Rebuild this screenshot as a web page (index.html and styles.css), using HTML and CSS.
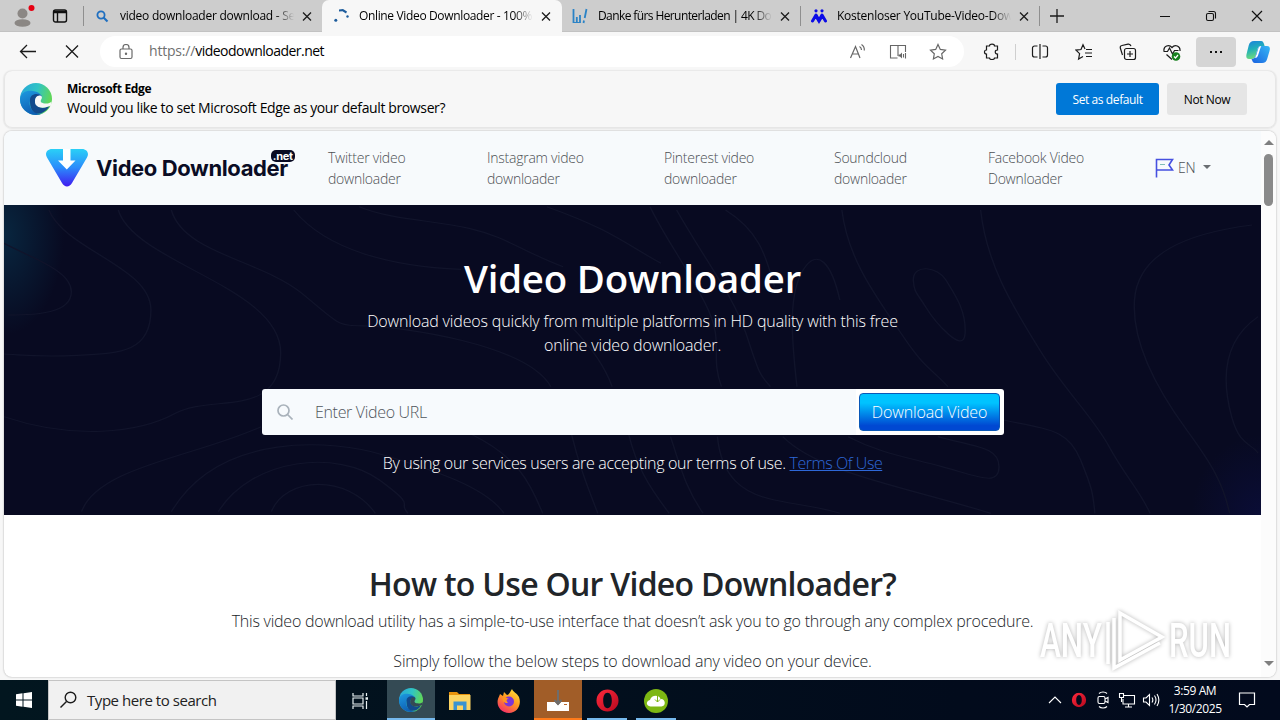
FILE: index.html
```html
<!DOCTYPE html>
<html lang="en">
<head>
  <meta charset="UTF-8">
  <meta name="viewport" content="width=device-width, initial-scale=1.0">
  <title>Online Video Downloader</title>
  <link rel="stylesheet" href="styles.css">
</head>
<body>
  <!-- shared icons -->
  <svg class="defs" width="0" height="0">
    <defs>
      <linearGradient id="edgeTop" x1="0" y1="0" x2="1" y2="0.3">
        <stop offset="0" stop-color="#27a4dc"/><stop offset="0.55" stop-color="#30c4c4"/><stop offset="1" stop-color="#5fd65a"/>
      </linearGradient>
      <linearGradient id="edgeLeft" x1="0" y1="0" x2="0.4" y2="1">
        <stop offset="0" stop-color="#1d9ae0"/><stop offset="1" stop-color="#0f5fb4"/>
      </linearGradient>
      <linearGradient id="logoFill" x1="0" y1="0" x2="0" y2="1">
        <stop offset="0" stop-color="#2ad0f7"/><stop offset="0.5" stop-color="#2b8bfb"/><stop offset="1" stop-color="#3f1cf0"/>
      </linearGradient>
      <linearGradient id="operaFill" x1="0" y1="0" x2="1" y2="1">
        <stop offset="0" stop-color="#ff2a3c"/><stop offset="1" stop-color="#b5081e"/>
      </linearGradient>
      <linearGradient id="foxFill" x1="0.8" y1="0" x2="0.2" y2="1">
        <stop offset="0" stop-color="#ffe23c"/><stop offset="0.45" stop-color="#ff9a1f"/><stop offset="1" stop-color="#f5266e"/>
      </linearGradient>
      <linearGradient id="copA" x1="0" y1="0" x2="0.3" y2="1">
        <stop offset="0" stop-color="#1c7fe0"/><stop offset="0.5" stop-color="#21b0b8"/><stop offset="1" stop-color="#6fdc7c"/>
      </linearGradient>
      <linearGradient id="copB" x1="0" y1="1" x2="1" y2="0">
        <stop offset="0" stop-color="#1a62e0"/><stop offset="1" stop-color="#35b7f5"/>
      </linearGradient>
      <symbol id="edge" viewBox="0 0 32 32">
        <circle cx="16" cy="16" r="16" fill="url(#edgeTop)"/>
        <path d="M0 16C1 9 7 7 13 8c6 1 9 4 9 7-6-5-14 0-12 8 2 6 8 9 13 7-8 5-23 0-23-14z" fill="url(#edgeLeft)"/>
        <path d="M10 17c0-6 7-8 12-4-6-1-8 4-6 8 3 5 9 4 13.500 2C25 31 16 33 12 27c-2-3-2-6-2-10z" fill="#124a8c"/>
      </symbol>
      <symbol id="close" viewBox="0 0 16 16"><path d="M4 4.500l8 8M12 4.500l-8 8" fill="none" stroke="#1b1b1b" stroke-width="1.300"/></symbol>
      <symbol id="opera" viewBox="0 0 24 24">
        <path fill-rule="evenodd" fill="url(#operaFill)" stroke="none" d="M12 0.500a11.500 11.500 0 1 0 0 23a11.500 11.500 0 1 0 0-23zM12 4c3 0 4.500 3.500 4.500 8s-1.500 8-4.500 8-4.500-3.500-4.500-8S9 4 12 4z"/>
      </symbol>
    </defs>
  </svg>

  <div class="tabstrip">
    <div class="profile">
      <svg width="24" height="24" viewBox="0 0 24 24"><circle cx="11.500" cy="9.500" r="5" fill="#8b8784"/><ellipse cx="11.500" cy="19" rx="8" ry="3.800" fill="#8b8784"/><circle cx="20.500" cy="4" r="3" fill="#e60012"/></svg>
    </div>
    <div class="workspaces">
      <svg width="16" height="16" viewBox="0 0 16 16" fill="none" stroke="#111" stroke-width="1.400"><rect x="1.500" y="2" width="13" height="12" rx="2"/><path d="M1.500 4h13" stroke-width="2.500"/><path d="M5.500 4v10"/></svg>
    </div>
    <div class="tab first">
      <svg class="favicon" viewBox="0 0 16 16" fill="none" stroke="#1f6fc0"><circle cx="7" cy="7" r="3.600" stroke-width="1.800"/><path d="M9.500 9.500l4 4" stroke-width="2.200"/></svg>
      <span class="tab-title t1">video downloader download - Se</span>
      <svg class="tab-close"><use href="#close"/></svg>
    </div>
    <div class="tab active">
      <svg class="favicon" viewBox="0 0 16 16" fill="#1d5c9c"><circle cx="1.800" cy="12.200" r="1.500"/><circle cx="13.500" cy="8.500" r="1.200"/><path d="M5 1.500l4-.5 4 2.500-1 2-3.500-2.200-3.500.2z"/></svg>
      <span class="tab-title t2">Online Video Downloader - 100%</span>
      <svg class="tab-close"><use href="#close"/></svg>
    </div>
    <div class="tab">
      <svg class="favicon" viewBox="0 0 16 16" stroke="#2b83c6" stroke-width="1.800"><path d="M1.500 1v14M4.800 9v6M8 7v8M14.500 1l-1.800 9M12 12.500l-.5 2.500" fill="none"/><path d="M1 14.500h7" fill="none" stroke-width="1"/></svg>
      <span class="tab-title t3">Danke fürs Herunterladen | 4K Do</span>
      <svg class="tab-close"><use href="#close"/></svg>
    </div>
    <div class="tab last">
      <svg class="favicon" viewBox="0 0 16 16"><path d="M1.500 13L5 7l3 5.500L11 7l3.500 6" fill="none" stroke="#0b0be6" stroke-width="3" stroke-linejoin="round" stroke-linecap="round"/><path d="M5 8l3 5 3-5" fill="none" stroke="#0b0be6" stroke-width="3"/><circle cx="5" cy="2.800" r="1.600" fill="#0b0be6"/><circle cx="11" cy="2.800" r="1.600" fill="#0b0be6"/></svg>
      <span class="tab-title t4">Kostenloser YouTube-Video-Dow</span>
      <svg class="tab-close"><use href="#close"/></svg>
    </div>
    <svg class="new-tab" width="14" height="14" viewBox="0 0 14 14"><path d="M7 0v14M0 7h14" stroke="#1b1b1b" stroke-width="1.300"/></svg>
    <div class="window-buttons">
      <svg width="46" height="32" viewBox="0 0 46 32"><path d="M18 16.500h10" stroke="#111"/></svg>
      <svg width="46" height="32" viewBox="0 0 46 32" fill="none" stroke="#111" stroke-width="1.100"><rect x="18.500" y="13.500" width="7" height="7" rx="1.500"/><path d="M20.500 11.500h5a2 2 0 0 1 2 2v5"/></svg>
      <svg width="46" height="32" viewBox="0 0 46 32"><path d="M18 11l10 10M28 11l-10 10" stroke="#111" stroke-width="1.200"/></svg>
    </div>
  </div>

  <div class="toolbar">
    <svg class="back" width="18" height="18" viewBox="0 0 18 18" fill="none" stroke="#1b1b1b" stroke-width="1.300"><path d="M17 8.500H1.500M8 2L1.500 8.500 8 15"/></svg>
    <svg class="stop" width="18" height="18" viewBox="0 0 18 18" fill="none" stroke="#1b1b1b" stroke-width="1.300"><path d="M3 2.500l12 12M15 2.500l-12 12"/></svg>
    <div class="address">
      <svg class="lock" width="14" height="16" viewBox="0 0 14 16" fill="none" stroke="#6a6a6a" stroke-width="1.200"><rect x="1" y="5" width="12" height="9.500" rx="1.500"/><path d="M4 5V3.500a3 3 0 0 1 6 0V5"/><circle cx="7" cy="9.800" r=".6" fill="#6a6a6a"/></svg>
      <span class="url"><span class="scheme">https://</span>videodownloader.net</span>
      <svg class="addr-icon" width="18" height="18" viewBox="0 0 18 18" fill="none" stroke="#666" stroke-width="1.200"><path d="M1.500 15L6.500 3.500 11 15M3.200 11h6.200M10.500 3.500c1.500.8 2 2 2 3.500M12.500 1.500c2.200 1.500 3 3.500 2.800 6"/></svg>
      <svg class="addr-icon" width="18" height="18" viewBox="0 0 18 18" fill="none" stroke="#666" stroke-width="1.100"><path d="M8.500 15H1.500V2.500H9V13M9 2.500h7.500V9M9 4v9"/><path d="M9.500 11.500h1.500l2-2v6l-2-2H9.500z" fill="#666" stroke="none"/><path d="M14.500 11v3.500M16.500 10v5.500"/></svg>
      <svg class="addr-icon" width="18" height="18" viewBox="0 0 18 18" fill="none" stroke="#666" stroke-width="1.200"><path d="M9 1.500l2.300 4.900 5.200.7-3.800 3.700.9 5.200L9 13.500 4.400 16l.9-5.200L1.500 7.100l5.200-.7z"/></svg>
    </div>
    <div class="tools">
      <svg class="tool" viewBox="0 0 18 18"><path d="M3.500 3h3c0-2.500 5-2.500 5 0h3v4c-3-.3-3 4.300 0 4v4h-3c0 2-5 2-5 0h-3v-4C.8 11 .8 7 3.500 7z"/></svg>
      <span class="tool-divider"></span>
      <svg class="tool" viewBox="0 0 18 18"><path d="M6.500 3H3.500a2 2 0 0 0-2 2v7a2 2 0 0 0 2 2h3M11.500 3h3a2 2 0 0 1 2 2v7a2 2 0 0 1-2 2h-3M9 1v15"/></svg>
      <svg class="tool" viewBox="0 0 18 18"><path d="M10 6L8 1.800 6 6.500l-5 .6 3.600 3.600-1 5.300L8 13.500M11 6.500h6M10 10h7M11 13.500h6"/></svg>
      <svg class="tool" viewBox="0 0 18 18"><rect x="5.500" y="5.500" width="11" height="11" rx="2"/><path d="M11 8v6M8 11h6M3.500 12L1.300 5C1 3.500 1.500 2.800 3 2.500L9 1.200c1.500-.3 2.500.3 3 2"/></svg>
      <svg class="tool" viewBox="0 0 18 18"><path d="M1 8c-.8-5 5-7 8-3.500C12 1 17.500 3 17 8M3.500 11.500L9 16.500M.5 8.500h4l2-3.500 3 6 2-3.500h4"/><circle cx="13" cy="13.500" r="4.300" fill="#17801e" stroke="none"/><path d="M11 13.500l1.500 1.500 2.500-3" stroke="#fff"/></svg>
      <div class="more"><i></i><i></i><i></i></div>
      <svg class="copilot" width="24" height="24" viewBox="0 0 24 24"><path d="M8 1h7c2 0 2.500 1.500 3 3l.6 2H15c-2 0-3 1-3.500 3L9.500 16c-.6 2-2 3-4 3H3c-3 0-3-3-2.300-5.500l2-8C3.500 2.500 5 1 8 1z" fill="url(#copA)"/><path d="M16 23H9c-2 0-2.500-1.500-3-3l-.5-1c2 0 3.400-1 4-3l2-7c.5-2 1.500-3 3.500-3h6c3 0 3.300 2.500 2.500 5l-2.200 7.500C20.500 21.500 19 23 16 23z" fill="url(#copB)"/><path d="M10.500 14.500l1.800-6c.4-1.400 1.500-2.500 3-2.500-1 1.500-2 6-3.300 9.500-.5 1.700-2 2.500-3 2.500z" fill="#fff"/></svg>
    </div>
  </div>

  <div class="infobar">
    <svg class="edge-logo" width="32" height="32" viewBox="0 0 32 32"><use href="#edge"/><path d="M17.500 13c3-1.500 5.500.5 4 3-2 3 0 4.500 5 4.500 2 0 3.500-.5 5-2v4l-4 1.200c-6 2.300-12 .3-12.500-4.200-.3-3 .5-5.500 2.500-6.500z" fill="#f7f7f7"/></svg>
    <div class="infobar-text">
      <strong>Microsoft Edge</strong>
      <span>Would you like to set Microsoft Edge as your default browser?</span>
    </div>
    <button class="btn-default">Set as default</button>
    <button class="btn-later">Not Now</button>
  </div>

  <div class="page">
    <div class="site">
      <header class="site-header">
        <div class="logo">
          <svg width="42" height="38" viewBox="0 0 42 38"><path d="M6 0h30c5 0 7.500 4.500 5 8.500L26 34c-2.500 4.500-7.500 4.500-10 0L1 8.500C-1.500 4.500 1 0 6 0z" fill="url(#logoFill)"/><path d="M17 -1h7.500v12.500h5L20.800 20.500 12 11.500h5z" fill="#fff"/></svg>
          <span class="logo-text">Video Downloader</span>
          <small>.net</small>
        </div>
        <nav>
          <a>Twitter video<br>downloader</a>
          <a>Instagram video<br>downloader</a>
          <a>Pinterest video<br>downloader</a>
          <a>Soundcloud<br>downloader</a>
          <a>Facebook Video<br>Downloader</a>
        </nav>
        <div class="lang">
          <svg width="19" height="20" viewBox="0 0 19 20" fill="none"><path d="M1.500 19.500V1.500h16l-3.500 5.500 3.500 5H1.500" stroke="#4650e0" stroke-width="1.600"/><path d="M5 6.500h5" stroke="#7fbfb8"/></svg>
          <span>EN</span>
          <i class="caret"></i>
        </div>
      </header>

      <section class="hero">
        <svg class="contours" viewBox="10 15 3080 930" preserveAspectRatio="none">
          <path d="M10 130C70 170 175 210 175 275S90 345 20 345M120 30C160 150 370 200 370 330S290 460 190 466 60 465 10 462M290 30C330 190 690 260 688 460S520 580 430 640 180 720 10 650M420 30C450 160 640 180 740 280S820 375 900 378 1290 430 1350 560M720 30C800 150 960 200 1130 208M880 20C960 60 1060 60 1150 85S1290 160 1380 200M200 935C240 800 480 770 640 680M420 935C540 690 820 720 940 765S1190 860 1235 940M535 935C620 770 830 750 930 840S970 900 1000 940M665 935C700 830 850 820 920 940M1340 20C1500 90 1530 130 1620 190M1400 380C1440 430 1480 490 1500 560M1150 700C1270 770 1300 850 1330 940M1400 700C1420 800 1440 860 1465 940M1540 700C1560 800 1590 860 1640 940"/>
          <g transform="translate(1568)">
            <path d="M90 30C170 200 230 290 260 400S290 520 320 560M25 20C60 110 110 190 160 310S170 460 200 560M210 30C300 100 310 180 330 260M495 30C510 180 580 290 640 400S710 500 755 560M835 30C850 200 920 330 980 450S1110 650 1150 740 1230 880 1250 940M1500 75C1340 100 1220 160 1212 300S1280 590 1340 690 1430 850 1445 940M1515 350C1420 430 1430 560 1450 650S1500 730 1515 760M670 240C670 190 730 200 750 240S800 330 797 400 720 360 700 320 672 280 670 240zM385 560C370 400 365 280 400 210S470 190 490 300M890 660C1010 690 1050 690 1080 780S1110 880 1115 940M730 710C820 740 880 740 880 800S830 830 740 800 590 760 510 710M190 710C200 830 250 880 330 900S440 920 490 940M350 710C440 820 650 860 860 940M75 710C100 800 110 860 155 940"/>
          </g>
        </svg>
        <h1>Video Downloader</h1>
        <p class="lead">Download videos quickly from multiple platforms in HD quality with this free<br>online video downloader.</p>
        <form class="search">
          <svg width="16" height="16" viewBox="0 0 16 16" fill="none" stroke="#a9b2bb" stroke-width="1.700"><circle cx="6.500" cy="6.500" r="5.500"/><path d="M10.500 10.500l5 5"/></svg>
          <span class="placeholder">Enter Video URL</span>
          <button type="button">Download Video</button>
        </form>
        <p class="terms">By using our services users are accepting our terms of use. <a>Terms Of Use</a></p>
      </section>

      <section class="howto">
        <h2>How to Use Our Video Downloader?</h2>
        <p class="how1">This video download utility has a simple-to-use interface that doesn’t ask you to go through any complex procedure.</p>
        <p class="how2">Simply follow the below steps to download any video on your device.</p>
      </section>
    </div>
    <div class="scrollbar">
      <i class="arrow-up"></i>
      <i class="thumb"></i>
      <i class="arrow-down"></i>
    </div>
    <svg class="watermark" width="200" height="66" viewBox="0 0 200 66">
      <g class="mark">
        <text x="5" y="50" textLength="62" lengthAdjust="spacingAndGlyphs">ANY</text>
        <text x="134" y="50" textLength="62" lengthAdjust="spacingAndGlyphs">RUN</text>
        <path d="M85 6L127 30 85 53zM79 11v50l46-25M73 15v42" fill="none" stroke="#fff" stroke-width="3.500"/>
      </g>
    </svg>
  </div>

  <div class="taskbar">
    <div class="start"><svg width="16" height="16" viewBox="0 0 16 16" fill="#fff"><path d="M0 2.200L6.500 1.300v6.200H0zM7.500 1.200L16 0v7.500H7.500zM0 8.500h6.500v6.200L0 13.800zM7.500 8.500H16V16l-8.500-1.200z"/></svg></div>
    <div class="task-search">
      <svg width="18" height="18" viewBox="0 0 18 18" fill="none" stroke="#1b1b1b" stroke-width="1.400"><circle cx="10.500" cy="6.500" r="5.300"/><path d="M6.500 10.500L.5 16.500"/></svg>
      <span>Type here to search</span>
    </div>
    <div class="task view"><svg width="18" height="16" viewBox="0 0 18 16" fill="none" stroke="#e8f0f2" stroke-width="1.200"><path d="M2 0v3h10V0M2 16v-3h10v3M2 5h10v6H2zM15.500 0v3M15.500 8v8"/><path d="M14.500 5.500h2.500" stroke-width="2.500"/></svg></div>
    <div class="task current"><svg width="24" height="24" viewBox="0 0 32 32"><use href="#edge"/><path d="M17.500 13c3-1.500 5.500.5 4 3-2 3 0 4.500 5 4.500 2 0 3.500-.5 5-2v4l-4 1.200c-6 2.300-12 .3-12.500-4.200-.3-3 .5-5.500 2.500-6.500z" fill="#344a54"/></svg></div>
    <div class="task"><svg width="22" height="20" viewBox="0 0 22 20"><path d="M0 1h8l2 2h11v5H0z" fill="#e8930c"/><path d="M0 4h21.500v15H0z" fill="#fcd462"/><path d="M4.500 19v-8.500h13V19h-3.500v-4.500H8V19z" fill="#3a93cf"/></svg></div>
    <div class="task"><svg width="24" height="24" viewBox="0 0 24 24"><path d="M3 5l3 2 1-4 3 3c2 0 3-3 5-6 1 3 5 4 7 8 3 8-2 16-10 16S-1 17 1 10c.5-2 1.500-3 2-5z" fill="url(#foxFill)"/><circle cx="12" cy="12.500" r="5" fill="#7b35d8"/><path d="M5 9c3-2 5 0 7 1-3 0-3 2-1 3.500-2 1.500-5 0-6-4.500z" fill="#ff9420"/></svg></div>
    <div class="task alert"><svg width="24" height="24" viewBox="0 0 24 24"><path d="M1 14h8l3 3 3-3h8v9H1z" fill="#fff"/><path d="M12 2v12M8.500 12l3.500 4 3.500-4" stroke="#6d6d6d" stroke-width="2" fill="none"/><path d="M18 16.500h3" stroke="#b8652d"/></svg></div>
    <div class="task running"><svg width="23" height="23"><use href="#opera"/></svg></div>
    <div class="task running"><svg width="24" height="24" viewBox="0 0 24 24"><circle cx="12" cy="12" r="12" fill="#7db713"/><path d="M6.500 17.500C1.500 17 2 11.500 6 11c1-5 9-6 10.500-1 5-.5 6 7 1 7.500z" fill="#fff"/><path d="M13.500 7v6M11 10.500l2.500 2.500 2.500-2.500" stroke="#7db713" fill="none"/></svg></div>

    <div class="tray">
      <svg class="tray-icon" viewBox="0 0 20 20"><path d="M4 13l6-6 6 6"/></svg>
      <svg class="tray-icon"><use href="#opera" x="2.500" y="2.500" width="15" height="15"/></svg>
      <svg class="tray-icon" viewBox="0 0 20 20"><rect x="5" y="6.500" width="7" height="7" rx="1.500"/><path d="M12 9l3-1.500v5L12 11M6 3.500C8 1.500 12 1.500 14 3.500M6 16.500c2 2 6 2 8 0"/></svg>
      <svg class="tray-icon" viewBox="0 0 20 20"><path d="M7 5.500h10.500v8.500H6V9M8 17h7M11.500 14v3M2.500 3.500h4v4h-4zM4.500 7.500V12"/></svg>
      <svg class="tray-icon" viewBox="0 0 20 20"><path d="M2.500 8h2.500l3.500-3.500v11L5 12H2.500zM11 7.500c1 1.500 1 3.500 0 5M13.500 5.500c2 3 2 6 0 9M16 4c2.500 4 2.500 8 0 12"/></svg>
      <div class="clock">3:59 AM<br>1/30/2025</div>
      <svg class="notice" width="18" height="18" viewBox="0 0 18 18" fill="none" stroke="#fff" stroke-width="1.200"><path d="M1.500 2h15v11.500h-5L9 16l-2.500-2.500h-5z"/></svg>
    </div>
  </div>
</body>
</html>
```
FILE: styles.css
```css
* {
  box-sizing: border-box;
}

body {
  margin: 0;
  width: 1280px;
  height: 720px;
  overflow: hidden;
  display: flex;
  flex-direction: column;
  background: #f7f7f7;
  font-family: "Open Sans", "Noto Sans", sans-serif;
  color: #000;
}

svg {
  display: block;
  flex: none;
}

.defs {
  position: absolute;
}

button {
  border: none;
  font-family: inherit;
  padding: 0;
  white-space: nowrap;
}

/* tabs */
.tabstrip {
  display: flex;
  align-items: center;
  height: 32px;
  background: #cdcdcd;
  border-bottom: 1px solid #c2c2c2;
}

.profile {
  width: 44px;
  padding-left: 11px;
}

.workspaces {
  width: 40px;
  height: 20px;
  padding: 2px 0 0 8px;
  border-right: 1px solid #8f8f8f;
}

.tab {
  display: flex;
  align-items: center;
  width: 239px;
  height: 32px;
  padding-left: 10px;
}

.tab.first {
  width: 238px;
}

.tab.active {
  width: 240px;
  padding-left: 12px;
  background: #f7f7f7;
  border-radius: 7px 7px 0 0;
  margin-bottom: -1px;
}

.favicon {
  width: 16px;
  height: 16px;
}

.tab-title {
  width: 174px;
  margin-left: 10px;
  white-space: nowrap;
  font-size: 12px;
  line-height: 20px;
  -webkit-mask-image: linear-gradient(to right, #000 155px, transparent 174px);
  mask-image: linear-gradient(to right, #000 155px, transparent 174px);
}

.tab.active .tab-title {
  margin-left: 9px;
}

.t1 { letter-spacing: -0.25px; }
.t2 { letter-spacing: -0.35px; }
.t3 { letter-spacing: -0.6px; }
.t4 { letter-spacing: -0.25px; }

.tab-close {
  width: 16px;
  height: 16px;
  margin-left: 5px;
}

.new-tab {
  margin-left: 10px;
}

.tab.last {
  position: relative;
}

.tab.last::before,
.tab.last::after {
  content: "";
  position: absolute;
  left: -1px;
  top: 6px;
  width: 1px;
  height: 20px;
  background: #8f8f8f;
}

.tab.last::after {
  left: 238px;
}

.window-buttons {
  display: flex;
  margin-left: auto;
}

/* toolbar */
.toolbar {
  display: flex;
  align-items: center;
  height: 39px;
  padding-left: 19px;
}

.stop {
  margin-left: 26px;
}

.address {
  display: flex;
  align-items: center;
  width: 864px;
  height: 31px;
  margin-left: 19px;
  padding: 0 17px 0 19px;
  border-radius: 16px;
  background: #fff;
}

.url {
  margin: -2px auto 0 16px;
  font-size: 14px;
  letter-spacing: -0.52px;
}

.scheme {
  color: #707070;
  letter-spacing: -0.2px;
}

.addr-icon {
  margin-left: 22px;
}

.tools {
  display: flex;
  align-items: center;
  margin-left: 6px;
}

.tool {
  width: 18px;
  height: 18px;
  margin: 0 13px;
  fill: none;
  stroke: #1b1b1b;
  stroke-width: 1.2;
}

.tool-divider {
  width: 1px;
  height: 16px;
  margin: 0 2px 0 1px;
  background: #cfcfcf;
}

.more {
  display: flex;
  align-items: center;
  justify-content: center;
  gap: 3px;
  width: 40px;
  height: 30px;
  margin: 0 10px 0 2px;
  border-radius: 4px;
  background: #d5d5d5;
}

.more i {
  width: 2px;
  height: 2px;
  background: #111;
}

/* default browser prompt */
.infobar {
  display: flex;
  align-items: center;
  height: 57px;
  margin: 0 4px;
  padding: 0 28px 0 15px;
  border: 1px solid #e6e6e6;
  border-width: 0 1px 1px;
  border-radius: 8px;
  box-shadow: 0 0 2px rgba(0, 0, 0, 0.2);
}

.infobar-text {
  display: flex;
  flex-direction: column;
  margin: -3px auto 0 15px;
  font-size: 14px;
  line-height: 19px;
  letter-spacing: -0.38px;
}

.infobar-text strong {
  font-size: 12px;
  letter-spacing: -0.3px;
}

.infobar button {
  height: 32px;
  border-radius: 3px;
  font-size: 12px;
  letter-spacing: -0.4px;
}

.btn-default {
  width: 103px;
  background: #0078d7;
  color: #fff;
}

.btn-later {
  width: 80px;
  margin-left: 8px;
  background: #e5e5e5;
}

/* page */
.page {
  position: relative;
  display: flex;
  height: 546px;
  margin: 3px 4px;
  overflow: hidden;
  border-radius: 8px;
  background: #fff;
  box-shadow: 0 0 2px rgba(0, 0, 0, 0.35);
}

.site {
  width: 1257px;
}

.site-header {
  display: flex;
  align-items: center;
  height: 74px;
  padding-left: 42px;
  background: #f7fafc;
}

.logo {
  display: flex;
  align-items: center;
  width: 282px;
}

.logo-text {
  margin-left: 8px;
  font-family: Inter, sans-serif;
  font-size: 22px;
  font-weight: 700;
  letter-spacing: -0.38px;
  white-space: nowrap;
  color: #0a0c24;
}

.logo small {
  z-index: 1;
  align-self: flex-start;
  margin: 1px 0 0 -17px;
  padding: 0 2px;
  border-radius: 5px;
  background: #0a0c24;
  color: #fff;
  font-family: Inter, sans-serif;
  font-weight: 700;
  font-size: 11px;
  line-height: 12px;
  letter-spacing: -0.3px;
}

nav {
  display: grid;
  grid-template-columns: 159px 177px 170px 154px 167px;
}

nav a,
.lang {
  font-size: 14px;
  font-weight: 300;
  line-height: 21px;
  letter-spacing: -0.25px;
  color: #4c5054;
}

.lang {
  display: flex;
  align-items: center;
}

.lang span {
  margin: -1px 0 0 4px;
}

.caret {
  margin: -2px 0 0 8px;
  border: 4px solid transparent;
  border-top-color: #6a6e72;
  border-bottom: 0;
}

.hero {
  position: relative;
  height: 310px;
  background:
    radial-gradient(ellipse 60px 100px at 0 30px, #08263f, transparent),
    radial-gradient(ellipse 70px 80px at 100% 100%, #0a0d36, transparent),
    #080a21;
  color: #fff;
  text-align: center;
}

.contours {
  position: absolute;
  left: 0;
  top: 0;
  width: 1257px;
  height: 310px;
  fill: none;
  stroke: #11142b;
  stroke-width: 3.5;
}

.hero h1,
.hero p,
.search {
  position: relative;
}

.hero h1 {
  margin: 0;
  padding-top: 49px;
  font-size: 38.4px;
  font-weight: 600;
  line-height: 48px;
  letter-spacing: -0.2px;
}

.hero p,
.howto p {
  margin: 0;
  font-size: 16px;
  font-weight: 300;
  line-height: 24px;
  white-space: nowrap;
}

.hero .lead {
  padding-top: 7px;
  letter-spacing: -0.16px;
}

.search {
  display: flex;
  align-items: center;
  width: 742px;
  height: 46px;
  margin: 32px 0 0 258px;
  padding: 0 4px 0 15px;
  border-radius: 3px;
  background: linear-gradient(to right, #f7fafd 80%, #fff 80%);
}

.placeholder {
  margin: 0 auto 0 22px;
  font-size: 16px;
  font-weight: 300;
  letter-spacing: -0.33px;
  color: #50565c;
}

.search button {
  width: 141px;
  height: 38px;
  border: 1px solid #0a58b8;
  border-radius: 4px;
  background: linear-gradient(#00c3ff 25%, #0048d2 88%);
  color: #fff;
  font-size: 16px;
  font-weight: 300;
  letter-spacing: -0.15px;
}

.hero .terms {
  padding-top: 16px;
  letter-spacing: -0.32px;
}

.terms a {
  color: #2e68d8;
  letter-spacing: -0.45px;
  text-decoration: underline;
}

.howto {
  padding-top: 49px;
  text-align: center;
  color: #212529;
}

.howto h2 {
  margin: 0;
  font-size: 32px;
  font-weight: 600;
  line-height: 40px;
  letter-spacing: -0.72px;
}

.howto .how1 {
  padding-top: 5px;
  letter-spacing: -0.235px;
}

.howto .how2 {
  padding-top: 16px;
  letter-spacing: -0.18px;
}

.scrollbar {
  display: flex;
  flex-direction: column;
  align-items: center;
  width: 15px;
  padding: 9px 0 11px;
  background: #fcfcfc;
}

.arrow-up,
.arrow-down {
  border: 5px solid transparent;
  border-bottom-color: #7f7f7f;
  border-top: 0;
}

.arrow-down {
  margin-top: auto;
  border-top: 5px solid #7f7f7f;
  border-bottom: 0;
}

.thumb {
  width: 9px;
  height: 52px;
  margin-top: 9px;
  border-radius: 5px;
  background: #8a8a8a;
}

.watermark {
  position: absolute;
  left: 1031px;
  top: 476px;
}

.mark {
  fill: #fff;
  font-family: Roboto, sans-serif;
  font-size: 48px;
  font-weight: 500;
  filter: drop-shadow(0 0 2px rgba(0, 0, 0, 0.3));
}

/* taskbar */
.taskbar {
  display: flex;
  align-items: center;
  height: 40px;
  margin-top: auto;
  background: linear-gradient(to right, #02161f, #020b1c 75%, #020a1d);
}

.start,
.task {
  display: flex;
  align-items: center;
  justify-content: center;
  width: 48px;
  height: 40px;
}

.task {
  margin-left: 1px;
}

.task.view {
  margin: 0 3px 0 0;
}

.task.current {
  margin-left: 0;
  background: #344a54;
  border-bottom: 2px solid #76b9ed;
}

.task svg {
  margin-top: 1px;
}

.task.alert {
  background: #a15d28;
  border-bottom: 2px solid #ff7a1a;
}

.task.running {
  background: linear-gradient(#76b9ed, #76b9ed) center bottom / 40px 2px no-repeat;
}

.task-search {
  display: flex;
  align-items: center;
  width: 288px;
  height: 40px;
  padding-left: 11px;
  border: 1px solid #c4c4c4;
  background: #f1f1f1;
  color: #222;
  font-size: 15px;
  letter-spacing: -0.45px;
}

.task-search span {
  margin-left: 9px;
}

.tray {
  display: flex;
  align-items: center;
  height: 40px;
  margin-left: auto;
  padding-right: 24px;
}

.tray-icon {
  width: 20px;
  height: 20px;
  margin: 0 2px;
  fill: none;
  stroke: #fff;
  stroke-width: 1.1;
}

.clock {
  width: 64px;
  color: #fff;
  font-size: 12px;
  line-height: 18px;
  letter-spacing: -0.4px;
  text-align: center;
}

.notice {
  margin-left: 11px;
}
```
